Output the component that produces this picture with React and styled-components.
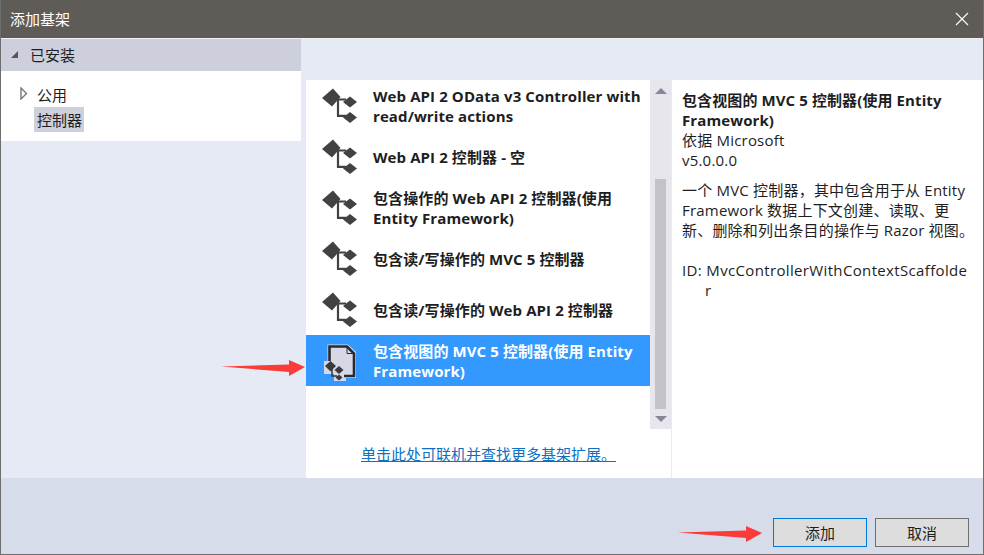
import React from 'react';
import styled, { createGlobalStyle } from 'styled-components';

const fontStack = '"Open Sans", "Noto Sans CJK SC", sans-serif';

const items = [
  { lines: ['Web API 2 OData v3 Controller with', 'read/write actions'] },
  { lines: ['Web API 2 控制器 - 空'] },
  { lines: ['包含操作的 Web API 2 控制器(使用', 'Entity Framework)'] },
  { lines: ['包含读/写操作的 MVC 5 控制器'] },
  { lines: ['包含读/写操作的 Web API 2 控制器'] },
  { lines: ['包含视图的 MVC 5 控制器(使用 Entity', 'Framework)'], selected: true },
];

const ControllerIcon = () => (
  <svg width="36" height="36" viewBox="0 0 36 36">
    <path d="M11 0.5 L18.5 9 L10 18.5 L0 10 Z" fill="#424242" />
    <path d="M28 8.5 L35 14 L28 19.5 L21 14 Z" fill="#424242" />
    <path d="M28 24 L35 29.5 L28 35 L21 29.5 Z" fill="#424242" />
    <path d="M14 11.5 H24 M16 11.5 V27.8 H24" stroke="#424242" strokeWidth="2.2" fill="none" />
  </svg>
);

const ViewIcon = () => (
  <svg width="36" height="40" viewBox="0 0 36 40">
    <path d="M5.5 3.5 H26 L34 11 V37 H24 V40 H12 V33 H2 V20 H5.5 Z" fill="#d6d8e6" />
    <path d="M7.5 20 V5.5 H25 L32 12.5 V35 H22" stroke="#2a2a2e" strokeWidth="2.6" fill="none" />
    <path d="M25 5.5 V12.5 H32" stroke="#2a2a2e" strokeWidth="1" fill="none" />
    <path d="M8.5 20 L14 25 L8.5 30.5 L3 25 Z" fill="#3a3a3e" />
    <path d="M17 25 L21.5 29 L17 33 L12.5 29 Z" fill="#3a3a3e" />
    <path d="M17 33.5 L20.5 36.5 L17 39.5 L13.5 36.5 Z" fill="#3a3a3e" />
    <path d="M10 27.5 V35 H15" stroke="#3a3a3e" strokeWidth="1.5" fill="none" />
  </svg>
);

const RedArrow = () => (
  <svg width="84" height="16" viewBox="0 0 84 16">
    <path d="M0 6.5 L68 4.5 L68 0 L84 7 L68 16 L68 12 Z" fill="#fb3a3a" />
  </svg>
);

const App = () => (
  <Page>
    <GlobalStyle />
    <TitleBar>
      <Title>添加基架</Title>
      <CloseIcon width="14" height="14" viewBox="0 0 14 14">
        <path d="M1 1 L13 13 M13 1 L1 13" stroke="#fff" strokeWidth="1.1" />
      </CloseIcon>
    </TitleBar>
    <Body>
      <Sidebar>
        <SidebarHeader>
          <ExpandedCaret />
          已安装
        </SidebarHeader>
        <Tree>
          <TreeRow>
            <CollapsedCaret width="8" height="13" viewBox="0 0 8 13">
              <path d="M1 1 L6.5 6.5 L1 12 Z" fill="#fff" stroke="#777" strokeWidth="1.4" />
            </CollapsedCaret>
            <TreeLabel>公用</TreeLabel>
          </TreeRow>
          <TreeRow>
            <TreeLabel $selected>控制器</TreeLabel>
          </TreeRow>
        </Tree>
      </Sidebar>
      <Main>
        <ListColumn>
          <List>
            {items.map((item, i) => (
              <Row key={i} $selected={item.selected}>
                <IconSlot>{item.selected ? <ViewIcon /> : <ControllerIcon />}</IconSlot>
                <RowText>
                  {item.lines.map((line) => (
                    <div key={line}>{line}</div>
                  ))}
                </RowText>
              </Row>
            ))}
          </List>
          <OnlineLink>单击此处可联机并查找更多基架扩展。</OnlineLink>
        </ListColumn>
        <Scrollbar>
          <ArrowUp />
          <Track>
            <Thumb />
          </Track>
          <ArrowDown />
        </Scrollbar>
        <Details>
          <DetailTitle>包含视图的 MVC 5 控制器(使用 Entity Framework)</DetailTitle>
          <div>依据 Microsoft</div>
          <div>v5.0.0.0</div>
          <Description>一个 MVC 控制器，其中包含用于从 Entity Framework 数据上下文创建、读取、更新、删除和列出条目的操作与 Razor 视图。</Description>
          <IdBlock>ID: MvcControllerWithContextScaffolder</IdBlock>
        </Details>
      </Main>
    </Body>
    <Footer>
      <Button $primary>添加</Button>
      <Button>取消</Button>
    </Footer>
    <ListArrow>
      <RedArrow />
    </ListArrow>
    <FooterArrow>
      <RedArrow />
    </FooterArrow>
  </Page>
);

const GlobalStyle = createGlobalStyle`
  html, body {
    margin: 0;
    padding: 0;
    background: #fff;
  }
`;

const Page = styled.div`
  position: relative;
  width: 984px;
  height: 555px;
  box-sizing: border-box;
  display: flex;
  flex-direction: column;
  border-left: 1px solid #6e6e6e;
  border-right: 1px solid #6e6e6e;
  border-bottom: 1px solid #6e6e6e;
  background: #e6eaf5;
  font-family: ${fontStack};
  font-size: 15px;
  color: #1e1e1e;
`;

const TitleBar = styled.div`
  height: 39px;
  flex: none;
  display: flex;
  align-items: center;
  justify-content: space-between;
  padding: 0 8px 0 9px;
  background: #5f5b56;
  border-bottom: 1px solid #f0f0f0;
  box-sizing: border-box;
`;

const Title = styled.div`
  color: #fff;
  font-size: 15px;
  margin-top: -2px;
`;

const CloseIcon = styled.svg`
  display: block;
  margin-right: 6px;
`;

const Body = styled.div`
  flex: 1;
  display: flex;
  gap: 5px;
  min-height: 0;
`;

const Sidebar = styled.div`
  width: 300px;
  height: 102px;
  background: #fff;
`;

const SidebarHeader = styled.div`
  height: 32px;
  box-sizing: border-box;
  padding: 0 0 1px 10px;
  display: flex;
  align-items: center;
  gap: 12px;
  background: #cdcfdc;
`;

const ExpandedCaret = styled.span`
  width: 0;
  height: 0;
  border-left: 7px solid transparent;
  border-bottom: 7px solid #555;
`;

const Tree = styled.div`
  padding-top: 11px;
`;

const TreeRow = styled.div`
  height: 25px;
  display: flex;
  align-items: center;
  padding-left: 19px;
`;

const CollapsedCaret = styled.svg`
  display: block;
  margin-right: 6px;
  margin-top: -2px;
`;

const TreeLabel = styled.span`
  padding: 1px 2px 0 3px;
  line-height: 24px;
  margin-left: ${(p) => (p.$selected ? '14px' : '0')};
  background: ${(p) => (p.$selected ? '#cdcfdc' : 'transparent')};
`;

const Main = styled.div`
  flex: 1;
  display: flex;
  margin-top: 41px;
  background: #fff;
  min-width: 0;
`;

const ListColumn = styled.div`
  width: 344px;
  flex: none;
  display: flex;
  flex-direction: column;
`;

const List = styled.div`
  height: 349px;
  flex: none;
  box-sizing: border-box;
  padding-top: 1px;
`;

const Row = styled.div`
  height: 50.8px;
  box-sizing: border-box;
  padding-top: ${(p) => (p.$selected ? '1px' : '0')};
  display: flex;
  align-items: center;
  background: ${(p) => (p.$selected ? '#3399ff' : 'transparent')};
  color: ${(p) => (p.$selected ? '#fff' : '#1e1e1e')};
`;

const IconSlot = styled.div`
  width: 67px;
  flex: none;
  display: flex;
  justify-content: center;
`;

const RowText = styled.div`
  font-weight: 700;
  line-height: 20px;
  letter-spacing: 0.1px;
  white-space: nowrap;
`;

const OnlineLink = styled.a`
  margin: 15px 0 0 55px;
  color: #0e70c0;
  text-decoration: underline;
  line-height: 20px;
`;

const Scrollbar = styled.div`
  width: 21px;
  height: 349px;
  flex: none;
  display: flex;
  flex-direction: column;
  align-items: center;
  background: #e6e6ec;
`;

const Track = styled.div`
  flex: 1;
  width: 11px;
  display: flex;
  flex-direction: column;
  justify-content: flex-end;
  padding: 0 0 7px;
`;

const Thumb = styled.div`
  height: 230px;
  background: #c2c3c9;
`;

const ArrowUp = styled.span`
  margin-top: 8px;
  border-left: 6px solid transparent;
  border-right: 6px solid transparent;
  border-bottom: 6px solid #868799;
`;

const ArrowDown = styled.span`
  margin-bottom: 7px;
  border-left: 6px solid transparent;
  border-right: 6px solid transparent;
  border-top: 6px solid #868799;
`;

const Details = styled.div`
  flex: 1;
  min-width: 0;
  box-sizing: border-box;
  padding: 10px 10px 0 10px;
  border-left: 1px solid #e6eaf5;
  line-height: 20px;
  letter-spacing: 0.2px;
`;

const DetailTitle = styled.div`
  font-weight: 700;
  letter-spacing: 0.1px;
`;

const Description = styled.div`
  margin: 10px -4px 0 0;
`;

const IdBlock = styled.div`
  margin-top: 20px;
  padding: 0 2px 0 23px;
  text-indent: -23px;
  letter-spacing: 0.35px;
  word-break: break-all;
`;

const Footer = styled.div`
  height: 76px;
  flex: none;
  display: flex;
  justify-content: flex-end;
  align-items: flex-end;
  gap: 8px;
  padding: 0 14px 7px 0;
  box-sizing: border-box;
  background: #d6dce9;
`;

const Button = styled.button`
  width: 94px;
  height: 29px;
  padding: 0;
  background: #dddddd;
  border: 1px solid ${(p) => (p.$primary ? '#0078d7' : '#707070')};
  font-family: ${fontStack};
  font-size: 15px;
  color: #1e1e1e;
`;

const ListArrow = styled.div`
  position: absolute;
  left: 220px;
  top: 360px;
  line-height: 0;
`;

const FooterArrow = styled.div`
  position: absolute;
  left: 677px;
  top: 526px;
  line-height: 0;
`;

export default App;
